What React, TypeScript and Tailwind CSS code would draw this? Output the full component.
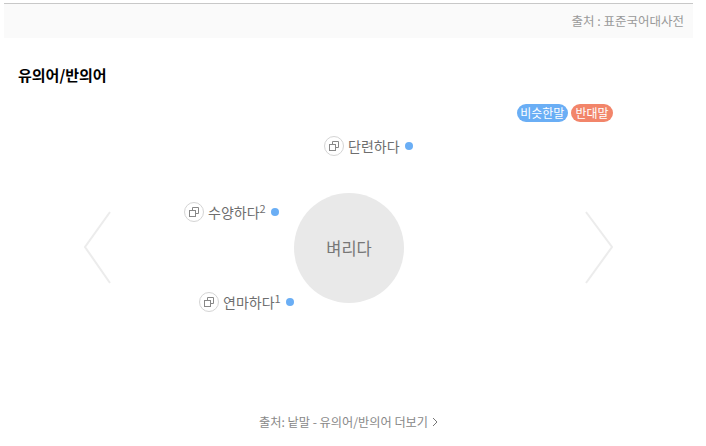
const font = { fontFamily: '"Noto Sans CJK KR", "Liberation Sans", sans-serif' };

function CopyIcon() {
  return (
    <span className="flex h-5 w-5 shrink-0 items-center justify-center rounded-full border border-[#d4d4d4] bg-white">
      <svg width="10" height="10" viewBox="0 0 10 10" fill="none" stroke="#888" strokeWidth="1">
        <path d="M3.5 3V.5h6v6H7" />
        <rect x="0.5" y="3.5" width="6" height="6" />
      </svg>
    </span>
  );
}

function WordNode({ word, sup, className }: { word: string; sup?: string; className: string }) {
  return (
    <div className={`absolute flex h-5 items-center ${className}`}>
      <CopyIcon />
      <span className="ml-1 whitespace-nowrap text-[14px] leading-5 text-[#6e6e6e]">
        {word}
        {sup && <sup className="-top-[5px] text-[11px] leading-none">{sup}</sup>}
      </span>
      <span className="ml-[5px] h-2 w-2 rounded-full bg-[#6aaef5]" />
    </div>
  );
}

export default function App() {
  return (
    <div className="h-[446px] w-[706px] overflow-hidden bg-white pl-1 pr-[13px] pt-[3px]" style={font}>
      <div className="flex h-[35px] items-center justify-end border-t border-[#c8c8c8] bg-[#fafafa] pr-[9px] text-[12.5px] text-[#999]">
        출처 : 표준국어대사전
      </div>

      <h2 className="mt-[25px] pl-[14px] text-[15px] font-bold leading-6 text-black">유의어/반의어</h2>

      <div className="mt-[17px] flex justify-end gap-[3px] pr-[80px] text-[12px] leading-[18px] text-white">
        <span className="rounded-full bg-[#6aaef5] px-[3.5px]">비슷한말</span>
        <span className="rounded-full bg-[#f2856a] px-[4.5px]">반대말</span>
      </div>

      <div className="relative h-[292px]">
        <WordNode word="단련하다" className="left-[320px] top-[14px]" />
        <WordNode word="수양하다" sup="2" className="left-[180px] top-[80px]" />
        <WordNode word="연마하다" sup="1" className="left-[195px] top-[170px]" />

        <div className="absolute left-[290px] top-[71px] flex h-[110px] w-[110px] items-center justify-center rounded-full bg-[#e9e9e9] text-[16.5px] text-[#777]">
          벼리다
        </div>

        <svg className="absolute left-[79px] top-[89px]" width="32" height="76" viewBox="0 0 32 76" fill="none" stroke="#ececec" strokeWidth="2">
          <path d="M27 1 2 36l25 36" />
        </svg>
        <svg className="absolute left-[580px] top-[89px]" width="32" height="76" viewBox="0 0 32 76" fill="none" stroke="#ececec" strokeWidth="2">
          <path d="M2 1l26 35L2 72" />
        </svg>
      </div>

      <div className="-mt-[2px] flex items-center justify-center gap-1 text-[12.2px] leading-5 text-[#888]">
        출처: 낱말 - 유의어/반의어 더보기
        <svg width="6" height="10" viewBox="0 0 6 10" fill="none" stroke="#777" strokeWidth="1">
          <path d="m1 1 4 4-4 4" />
        </svg>
      </div>
    </div>
  );
}
